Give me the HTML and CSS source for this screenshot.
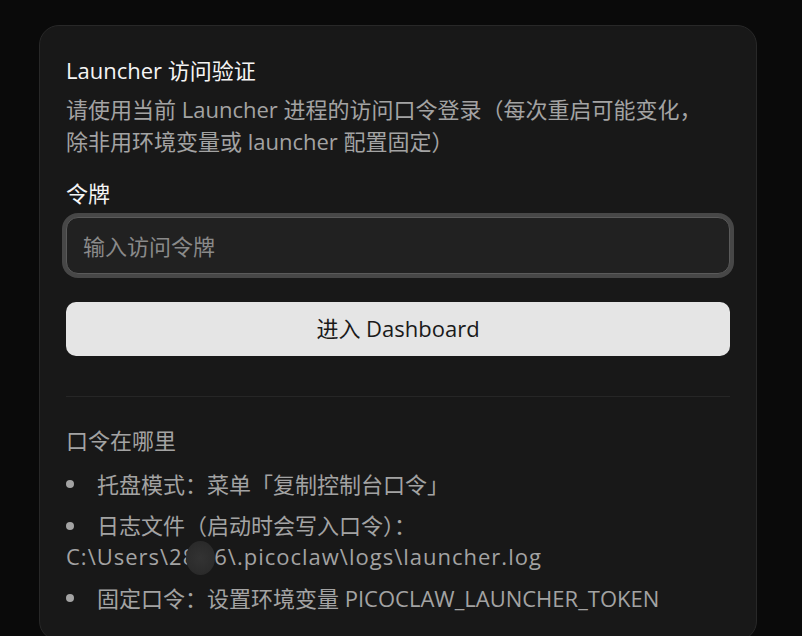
FILE: index.html
```html
<!DOCTYPE html>
<html lang="zh-CN">
<head>
<meta charset="utf-8">
<title>Launcher 访问验证</title>
<link rel="stylesheet" href="styles.css">
</head>
<body>
<main class="card">
  <h1 class="title">Launcher 访问验证</h1>
  <p class="desc">请使用当前 Launcher 进程的访问口令登录（每次重启可能变化，<br>除非用环境变量或 launcher 配置固定）</p>
  <label class="label" for="token">令牌</label>
  <input id="token" class="input" type="password" placeholder="输入访问令牌" autofocus>
  <button class="btn" type="button">进入 Dashboard</button>
  <div class="divider"></div>
  <h2 class="sub">口令在哪里</h2>
  <ul class="list">
    <li>托盘模式：菜单「复制控制台口令」</li>
    <li>日志文件（启动时会写入口令）： <span class="path">C:\Users\28<span class="blur"></span>6\.picoclaw\logs\launcher.log</span></li>
    <li>固定口令：设置环境变量 PICOCLAW_LAUNCHER_TOKEN</li>
  </ul>
</main>
</body>
</html>
```

FILE: styles.css
```css
* { box-sizing: border-box; }
html, body { margin: 0; padding: 0; }
body {
  background: #0a0a0a;
  font-family: "Open Sans", "Noto Sans CJK SC", sans-serif;
  font-size: 22px;
  color: #a3a3a3;
  overflow: hidden;
  height: 636px;
}
.card {
  width: 718px;
  margin: 25px 0 0 39px;
  background: #181818;
  border: 1px solid #282828;
  border-radius: 20px;
  padding: 28px 26px 26px;
  display: flex;
  flex-direction: column;
}
.title {
  margin: 0;
  font-size: 22px;
  font-weight: 400;
  line-height: 32px;
  color: #f5f5f5;
}
.desc {
  margin: 8px 0 0;
  line-height: 31.5px;
  color: #a3a3a3;
}
.label {
  margin-top: 20px;
  line-height: 32px;
  color: #f5f5f5;
}
.input {
  margin-top: 8px;
  height: 57px;
  width: 100%;
  background: #212121;
  border: 1px solid #5a5a5a;
  border-radius: 12px;
  box-shadow: 0 0 0 4px #474747;
  padding: 0 16px;
  font: inherit;
  color: #f5f5f5;
  outline: none;
  caret-color: #ffffff;
}
.input::placeholder { color: #8a8a8a; }
.btn {
  margin-top: 28px;
  height: 54px;
  width: 100%;
  border: none;
  border-radius: 10px;
  background: #e5e5e5;
  color: #1a1a1a;
  font: inherit;
  padding: 0 0 4px;
  cursor: pointer;
}
.divider {
  margin-top: 40px;
  height: 1px;
  background: #262626;
}
.sub {
  margin: 27px 0 0;
  font-size: 22px;
  font-weight: 400;
  line-height: 32px;
  color: #a3a3a3;
}
.list {
  list-style: none;
  margin: 12.5px 0 0;
  padding: 0;
  display: flex;
  flex-direction: column;
  gap: 10.5px;
  line-height: 31px;
}
.list li::before {
  content: "";
  display: inline-block;
  width: 8px;
  height: 8px;
  border-radius: 50%;
  background: #a3a3a3;
  margin: 0 23px 0 0;
  vertical-align: 0.2em;
}
.path { white-space: nowrap; letter-spacing: 1px; }
.blur {
  display: inline-block;
  position: relative;
  width: 18px;
  height: 1px;
}
.blur::after {
  content: "";
  position: absolute;
  left: -10px;
  top: -23px;
  width: 29px;
  height: 34px;
  border-radius: 50%;
  background: radial-gradient(circle, #333 0%, #2c2c2c 60%, #262626 100%);
}
```
